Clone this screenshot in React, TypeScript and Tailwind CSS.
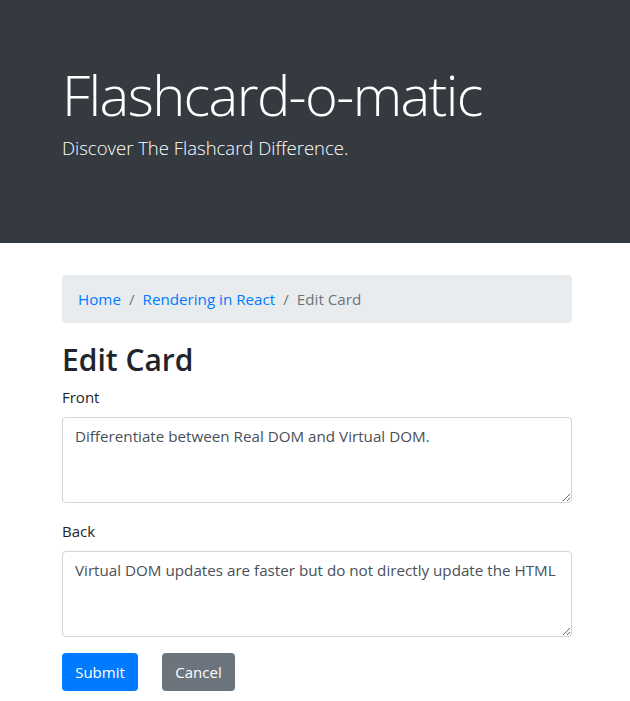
export default function App() {
  const font = { fontFamily: '"Open Sans", "Noto Sans", sans-serif' };
  return (
    <div className="min-h-[701px] bg-white text-[#212529]" style={font}>
      <div className="h-[243px] bg-[#343a40] text-white">
        <div className="ml-[47px] w-[540px] px-[15px] pt-[61px]">
          <h1 className="text-[56px] font-light leading-[67px] tracking-[-1.6px]">Flashcard-o-matic</h1>
          <p className="mt-[5px] text-[18.5px] font-light leading-[30px]">Discover The Flashcard Difference.</p>
        </div>
      </div>
      <div className="ml-[47px] mt-[32px] w-[540px] px-[15px]">
        <nav className="flex h-[48px] items-center rounded bg-[#e9ecef] px-4 text-[15.2px]">
          <a href="#" className="text-[#007bff]">Home</a>
          <span className="px-2 text-[#6c757d]">/</span>
          <a href="#" className="text-[#007bff]">Rendering in React</a>
          <span className="px-2 text-[#6c757d]">/</span>
          <span className="text-[#6c757d]">Edit Card</span>
        </nav>
        <h2 className="mt-[15px] text-[30px] font-semibold leading-[44px]">Edit Card</h2>
        <form className="mt-[3px]">
          <div className="mb-4">
            <label className="mb-2 block text-[15px] leading-[24px]">Front</label>
            <textarea
              rows={3}
              className="block h-[86px] w-full rounded border border-[#ced4da] px-3 py-[6px] text-[15.2px] leading-[24px] text-[#495057]"
              defaultValue="Differentiate between Real DOM and Virtual DOM."
            />
          </div>
          <div className="mb-4">
            <label className="mb-2 block text-[15px] leading-[24px]">Back</label>
            <textarea
              rows={3}
              className="block h-[86px] w-full rounded border border-[#ced4da] px-3 py-[6px] text-[15.2px] leading-[24px] text-[#495057]"
              defaultValue="Virtual DOM updates are faster but do not directly update the HTML"
            />
          </div>
          <div className="flex gap-6">
            <button type="button" className="h-[38px] w-[76px] rounded bg-[#007bff] text-[15px] text-white">Submit</button>
            <button type="button" className="h-[38px] w-[73px] rounded bg-[#6c757d] text-[15px] text-white">Cancel</button>
          </div>
        </form>
      </div>
    </div>
  );
}
